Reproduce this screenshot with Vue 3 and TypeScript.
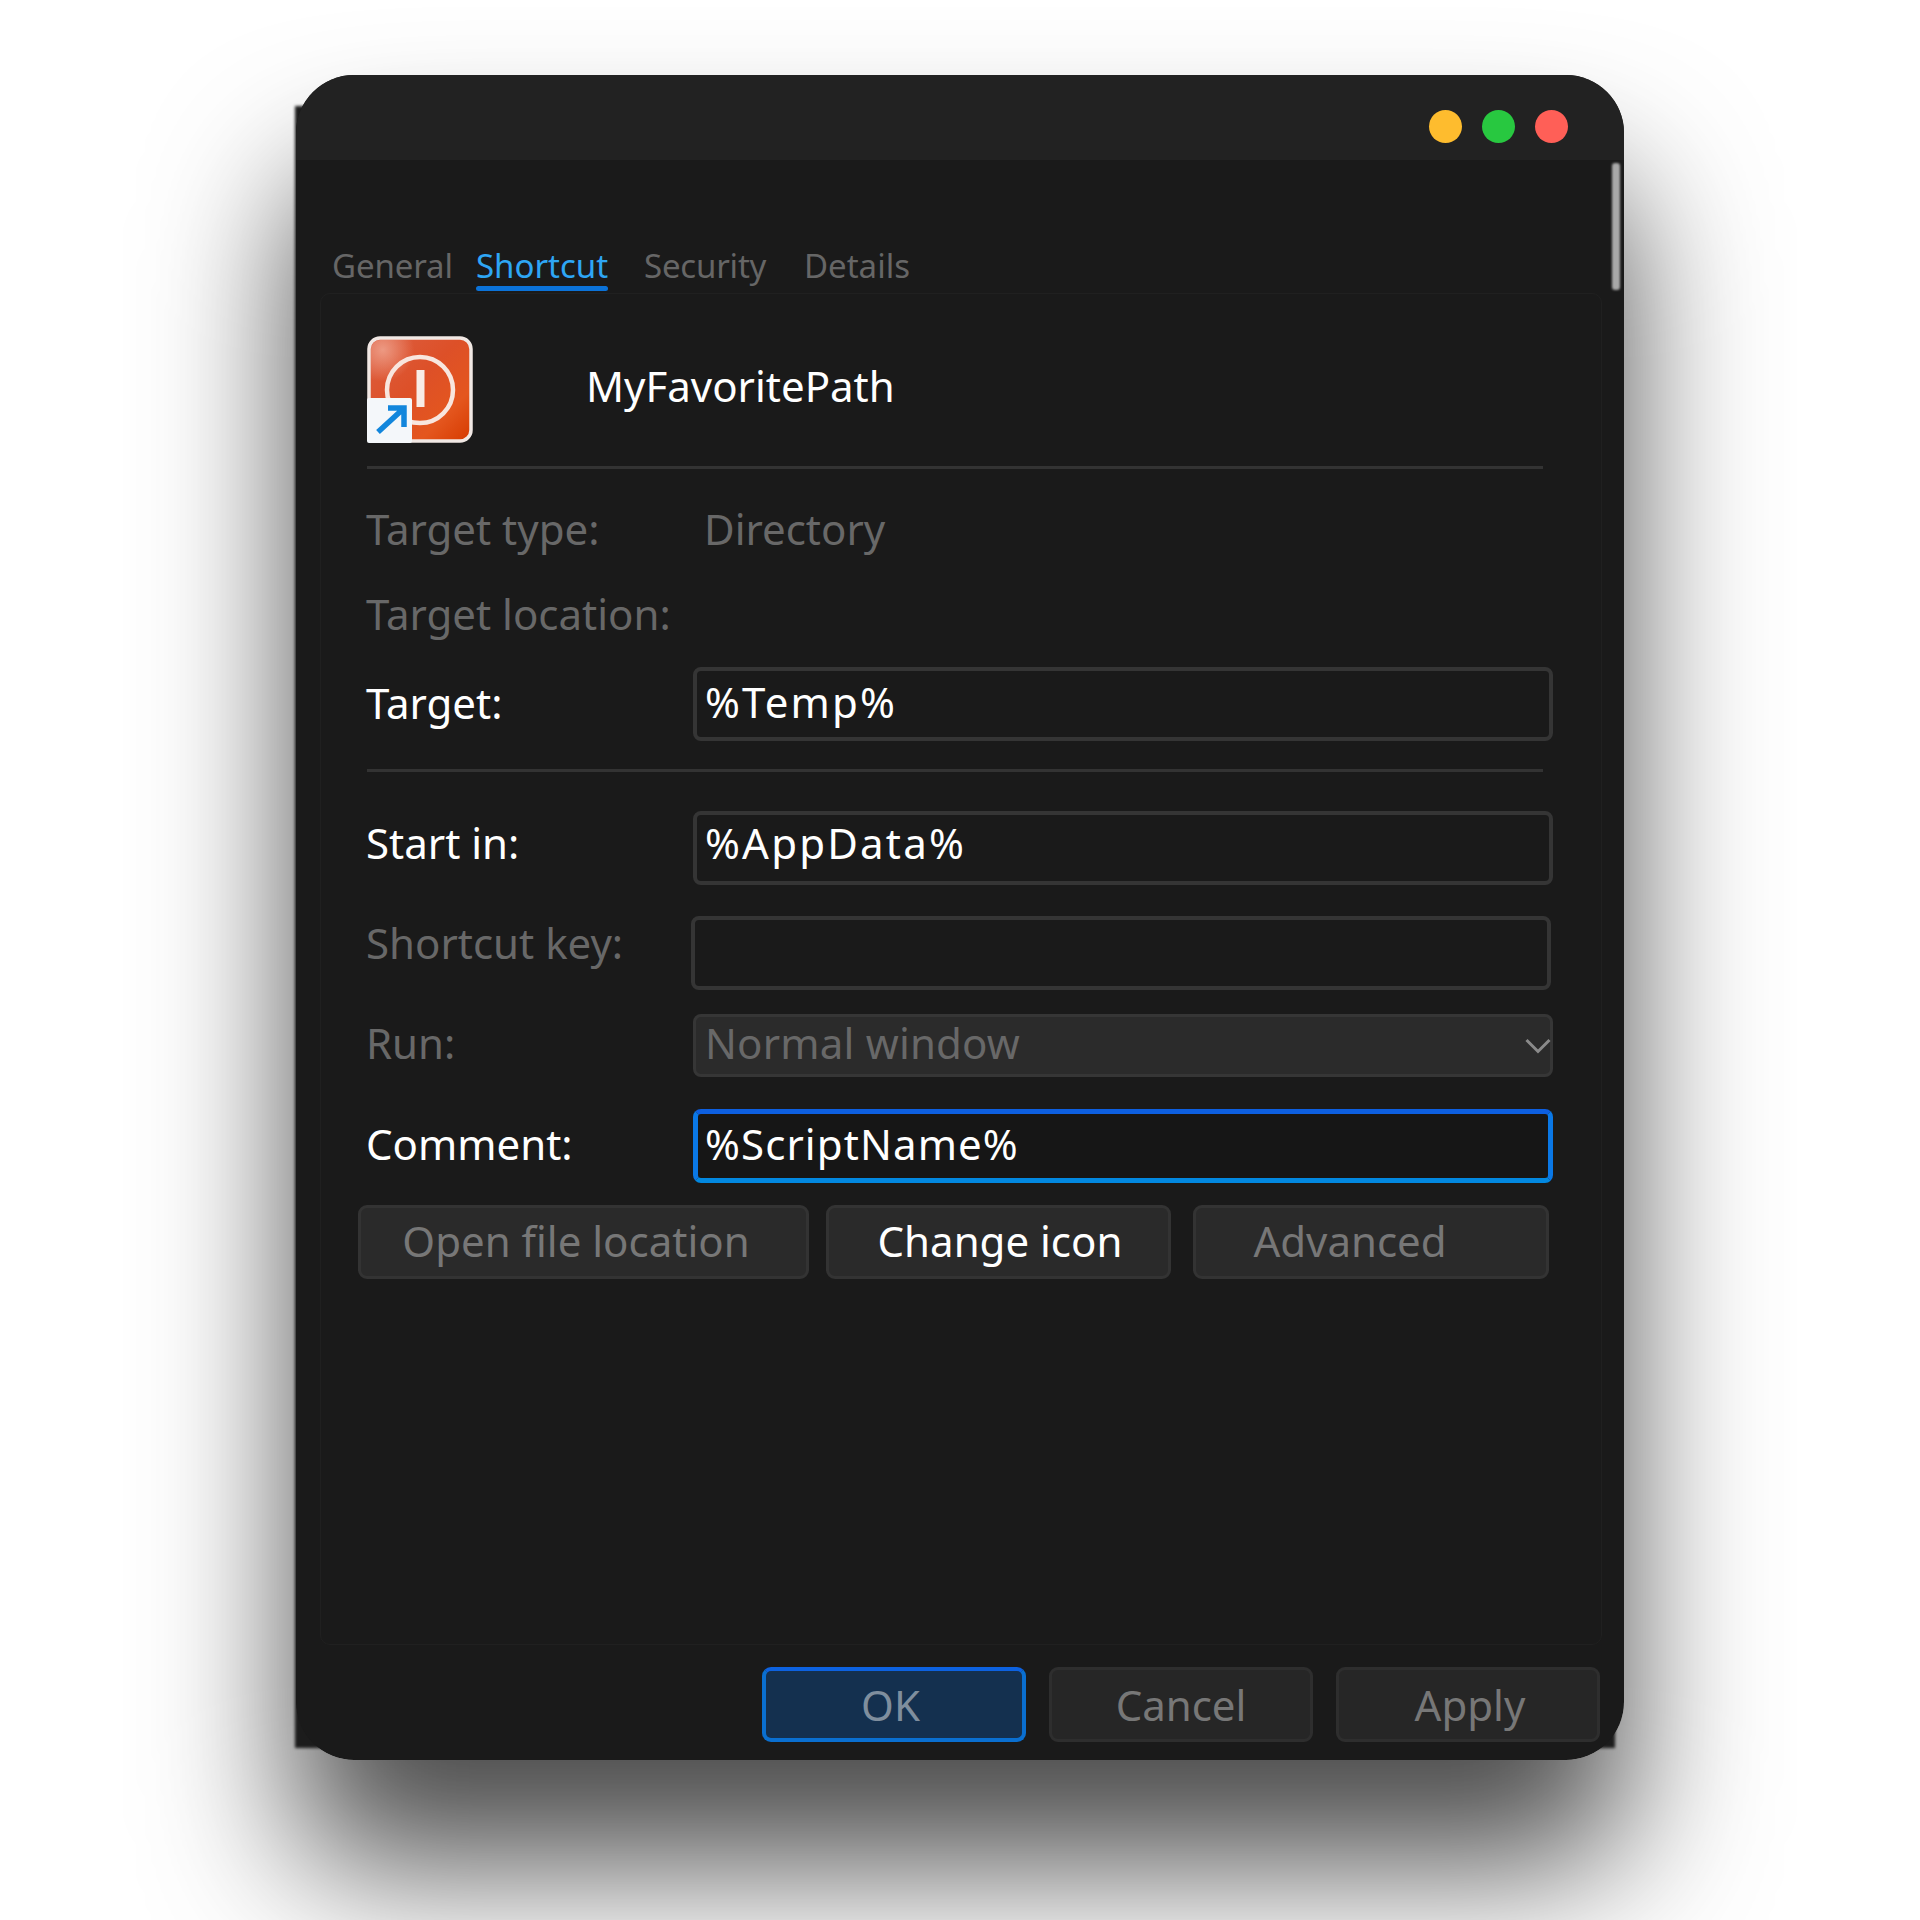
<script setup lang="ts">
const tabs: { name: string; active?: boolean; cls: string }[] = [
  { name: 'General', cls: 't1' },
  { name: 'Shortcut', active: true, cls: 't2' },
  { name: 'Security', cls: 't3' },
  { name: 'Details', cls: 't4' },
]
</script>

<template>
  <div class="page">
    <div class="frame">
      <div class="under"></div>
      <div class="window">
        <div class="titlebar">
          <span class="dot yellow"></span>
          <span class="dot green"></span>
          <span class="dot red"></span>
        </div>
        <div class="body">
          <span class="scrollbar"></span>
          <div class="tabs">
            <div v-for="t in tabs" :key="t.name" class="tab" :class="[t.cls, { active: t.active }]">{{ t.name }}</div>
          </div>
          <div class="panel">
            <div class="header">
              <svg class="icon" viewBox="0 0 106 107" width="106" height="107">
                <defs>
                  <linearGradient id="ig" x1="0" y1="0" x2="1" y2="1">
                    <stop offset="0" stop-color="#dc5f42" />
                    <stop offset="0.45" stop-color="#dd5028" />
                    <stop offset="0.75" stop-color="#e4561e" />
                    <stop offset="1" stop-color="#d63a00" />
                  </linearGradient>
                  <radialGradient id="hl" cx="0.12" cy="0.1" r="0.32">
                    <stop offset="0" stop-color="#f0a48f" stop-opacity="0.85" />
                    <stop offset="1" stop-color="#f0a48f" stop-opacity="0" />
                  </radialGradient>
                </defs>
                <rect x="2" y="2" width="102" height="103" rx="11" fill="url(#ig)" stroke="#f1e8e4" stroke-width="3.5" />
                <rect x="4" y="4" width="98" height="99" rx="9" fill="url(#hl)" />
                <circle cx="53" cy="54" r="33" fill="none" stroke="#f8e6de" stroke-width="4.5" />
                <rect x="49.5" y="34" width="8" height="37" fill="#f8ece6" />
                <rect x="0" y="62" width="45" height="45" rx="2" fill="#f4f7fa" />
                <path d="M11 96 L35 74 M21 72 H37 V91" fill="none" stroke="#1286dc" stroke-width="5.5" />
              </svg>
              <div class="name">MyFavoritePath</div>
            </div>
            <div class="divider"></div>

            <div class="row r-type">
              <div class="label dim">Target type:</div>
              <div class="value dim">Directory</div>
            </div>
            <div class="row r-loc">
              <div class="label dim">Target location:</div>
            </div>
            <div class="row r-target">
              <div class="label">Target:</div>
              <div class="field wide">%Temp%</div>
            </div>
            <div class="divider second"></div>
            <div class="row r-start">
              <div class="label up">Start in:</div>
              <div class="field wide up">%AppData%</div>
            </div>
            <div class="row r-key">
              <div class="label dim up2">Shortcut key:</div>
              <div class="field shifted"></div>
            </div>
            <div class="row r-run">
              <div class="label dim">Run:</div>
              <div class="field select">
                <span>Normal window</span>
                <svg class="chev" viewBox="0 0 26 16" width="26" height="16">
                  <path d="M1.5 2 L13 13.5 L24.5 2" fill="none" stroke="#8a8a8a" stroke-width="3" />
                </svg>
              </div>
            </div>
            <div class="row r-comment">
              <div class="label">Comment:</div>
              <div class="field focus">%ScriptName%</div>
            </div>
            <div class="actions">
              <div class="btn b-open dim">Open file location</div>
              <div class="btn b-change">Change icon</div>
              <div class="btn b-adv dim">Advanced</div>
            </div>
          </div>
          <div class="footer">
            <div class="btn foot ok">OK</div>
            <div class="btn foot">Cancel</div>
            <div class="btn foot f-apply">Apply</div>
          </div>
        </div>
      </div>
    </div>
  </div>
</template>

<style>
html, body { background: #fff; }
</style>

<style scoped>
.page {
  width: 1920px;
  height: 1920px;
  box-sizing: border-box;
  padding: 75px 0 0 296px;
  background: #fff;
  overflow: hidden;
  font-family: "Noto Sans", "Open Sans", sans-serif;
  color: #fff;
}
.frame {
  position: relative;
  width: 1328px;
  height: 1685px;
}
.under {
  position: absolute;
  left: -1px;
  top: 31px;
  width: 1320px;
  height: 1642px;
  background: #1c1c1c;
  filter: blur(1.5px);
  z-index: 2;
}
.window {
  position: relative;
  z-index: 3;
  width: 1328px;
  height: 1685px;
  border-radius: 58px;
  overflow: hidden;
  background: #1a1a1a;
  display: flex;
  flex-direction: column;
}
.frame::before {
  content: "";
  position: absolute;
  inset: 0;
  border-radius: 58px;
  box-shadow: 0 105px 145px rgba(0, 0, 0, 0.7);
  z-index: 1;
}
.titlebar {
  height: 85px;
  flex: none;
  background: #222;
  display: flex;
  justify-content: flex-end;
  align-items: flex-start;
  gap: 20px;
  padding: 35px 56px 0 0;
  box-sizing: border-box;
}
.dot { width: 33px; height: 33px; border-radius: 50%; }
.yellow { background: #febc2e; }
.green { background: #28c840; }
.red { background: #ff5f57; }
.body {
  flex: 1;
  position: relative;
  padding: 0 22px 0 24px;
  display: flex;
  flex-direction: column;
}
.scrollbar {
  position: absolute;
  right: 4px;
  top: 3px;
  width: 8px;
  height: 127px;
  background: #a8a8a8;
  border-radius: 3px;
  filter: blur(1.2px);
}
.tabs {
  height: 133px;
  flex: none;
  display: flex;
  align-items: flex-end;
  padding-left: 12px;
  box-sizing: border-box;
}
.tab {
  position: relative;
  font-size: 33px;
  line-height: 44px;
  height: 44px;
  padding-bottom: 5px;
  color: #666;
  white-space: nowrap;
}
.t1 { width: 144px; letter-spacing: -0.1px; }
.t2 { width: 132px; margin-right: 36px; }
.t3 { width: 160px; letter-spacing: -0.2px; }
.tab.active { color: #2ea6f5; }
.tab.active::after {
  content: "";
  position: absolute;
  left: 0;
  right: 0;
  bottom: 2px;
  height: 5px;
  background: #0b72d8;
  border-radius: 3px;
}
.panel {
  flex: none;
  height: 1352px;
  box-sizing: border-box;
  border: 1px solid #202020;
  border-radius: 10px;
  padding: 42px 48px 0 46px;
  display: flex;
  flex-direction: column;
}
.header {
  display: flex;
  align-items: center;
  height: 107px;
  flex: none;
}
.icon { flex: none; display: block; filter: blur(0.5px); }
.name {
  font-size: 42px;
  line-height: 50px;
  margin-left: 113px;
  margin-top: -8px;
  white-space: nowrap;
}
.divider {
  height: 3px;
  background: #333;
  flex: none;
  margin: 23px 10px 0 0;
}
.divider.second { margin-top: 28px; }
.row {
  display: grid;
  grid-template-columns: 327px 1fr;
  align-items: center;
  flex: none;
  font-size: 42px;
  line-height: 56px;
  margin-left: -1px;
}
.label, .value { white-space: nowrap; padding-bottom: 3px; }
.dim { color: #686868; }
.r-type { margin-top: 31px; height: 60px; }
.value { padding-left: 11px; }
.r-loc { margin-top: 25px; height: 60px; }
.r-target { margin-top: 22px; height: 74px; }
.r-start { margin-top: 39px; height: 74px; }
.r-key { margin-top: 30px; height: 74px; }
.r-run { margin-top: 25px; height: 63px; }
.r-comment { margin-top: 32px; height: 74px; }
.label.up { padding-bottom: 11px; }
.label.up2 { padding-bottom: 19px; }
.r-run .label, .r-comment .label { padding-bottom: 5px; }
.field {
  height: 74px;
  box-sizing: border-box;
  border: 4px solid #353535;
  border-radius: 8px;
  padding: 0 0 5px 8px;
  display: flex;
  align-items: center;
  white-space: nowrap;
}
.wide { letter-spacing: 2.2px; }
.field.up { padding-bottom: 11px; }
.shifted { transform: translateX(-2px); }
.select {
  height: 63px;
  background: #2b2b2b;
  border-width: 3px;
  border-color: #363636;
  color: #686868;
  justify-content: space-between;
  position: relative;
  padding-left: 9px;
  letter-spacing: 0.2px;
}
.chev { position: absolute; right: -1px; top: 21px; }
.focus {
  border-width: 5px;
  border-color: #0a78e6;
  border-top-color: #0d5fe0;
  border-bottom-color: #0288e0;
  background: #161616;
  padding-left: 7px;
  letter-spacing: 1.1px;
}
.actions {
  display: flex;
  margin: 22px 0 0 -9px;
  flex: none;
}
.btn {
  box-sizing: border-box;
  height: 74px;
  border: 3px solid #333;
  border-radius: 9px;
  background: #2a2a2a;
  font-size: 42px;
  display: flex;
  align-items: center;
  justify-content: center;
  padding-bottom: 3px;
  white-space: nowrap;
  flex: none;
}
.b-open { width: 451px; margin-right: 17px; padding-right: 15px; }
.b-change { width: 345px; margin-right: 22px; padding-left: 3px; }
.b-adv { width: 356px; padding-right: 42px; }
.btn.dim { color: #777; }
.footer {
  display: flex;
  justify-content: flex-end;
  gap: 23px;
  margin: 22px 2px 0 0;
  flex: none;
}
.foot {
  width: 264px;
  height: 75px;
  color: #777;
  background: #262626;
  border-color: #2e2e2e;
  padding-bottom: 0;
}
.f-apply { padding-left: 4px; }
.ok {
  background: #14304f;
  border: 4px solid #0a6fd0;
  border-top-color: #0d62e0;
  color: #7f8e9e;
  padding-right: 7px;
}
</style>
